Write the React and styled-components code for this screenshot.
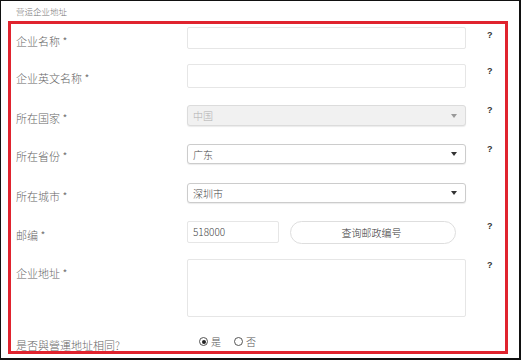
import React from 'react';
import styled, { createGlobalStyle } from 'styled-components';

const Global = createGlobalStyle`
  html, body { margin: 0; padding: 0; background: #fff; }
  body { font-family: "Noto Sans CJK SC", "Noto Sans", sans-serif; font-weight: 300; }
`;

/* marco exterior */
const Frame = styled.div`
  box-sizing: border-box;
  width: 521px;
  height: 360px;
  border: 1px solid #111;
  border-right-width: 2px;
  border-bottom-width: 2px;
  padding: 0 0 0 7px;
  overflow: hidden;
`;

const Title = styled.div`
  font-size: 8.5px;
  line-height: 20px;
  color: #777;
  padding-left: 8px;
`;

const RedBox = styled.div`
  box-sizing: border-box;
  width: 500px;
  height: 333px;
  border: 3px solid #e0232e;
  padding: 3px 0 0 5px;
  overflow: hidden;
`;

const Row = styled.div`
  display: grid;
  grid-template-columns: 171px 279px 1fr;
  align-items: start;
  height: ${(p) => p.h}px;
`;

const Label = styled.div`
  font-size: 11px;
  line-height: 16px;
  color: #666;
  padding-top: ${(p) => p.top ?? 5}px;
  white-space: nowrap;
`;

const Help = styled.div`
  font-family: "Liberation Sans", Arial, sans-serif;
  font-weight: bold;
  font-size: 9px;
  color: #333;
  padding-left: 21px;
  padding-top: ${(p) => p.top ?? 0}px;
  line-height: 10px;
`;

const TextInput = styled.div`
  box-sizing: border-box;
  height: ${(p) => p.h}px;
  width: ${(p) => p.w || 279}px;
  border: 1px solid #e6e6e6;
  border-radius: 2px;
  background: #fff;
  font-size: 10px;
  color: #444;
  line-height: ${(p) => p.h - 2}px;
  padding-left: 5px;
`;

const Select = styled.div`
  box-sizing: border-box;
  height: ${(p) => p.h}px;
  width: 279px;
  border: 1px solid ${(p) => (p.disabled ? '#dcdcdc' : '#cccccc')};
  border-radius: 3px;
  background: ${(p) => (p.disabled ? '#f1f1f1' : '#fff')};
  box-shadow: 0 1px 1px rgba(0, 0, 0, 0.08);
  display: flex;
  align-items: center;
  justify-content: space-between;
  padding: 0 8px 0 5px;
  font-size: 10px;
  color: ${(p) => (p.disabled ? '#b0b0b0' : '#444')};
`;

const Arrow = styled.span`
  width: 0;
  height: 0;
  border-left: 3px solid transparent;
  border-right: 3px solid transparent;
  border-top: 4px solid ${(p) => (p.light ? '#999' : '#333')};
`;

const ZipWrap = styled.div`
  display: flex;
  gap: 11px;
`;

const PillButton = styled.div`
  box-sizing: border-box;
  width: 166px;
  height: 23px;
  border: 1px solid #dedede;
  border-radius: 12px;
  background: #fff;
  font-size: 10px;
  color: #333;
  display: flex;
  align-items: center;
  justify-content: center;
  padding-right: 3px;
`;

const Radios = styled.div`
  display: flex;
  align-items: center;
  gap: 13px;
  padding-left: 12px;
  padding-top: 1px;
`;

const RadioItem = styled.label`
  display: flex;
  align-items: center;
  gap: 3px;
  font-size: 10px;
  color: #555;
`;

const Circle = styled.span`
  box-sizing: border-box;
  width: 9px;
  height: 9px;
  border-radius: 50%;
  border: 1px solid #555;
  display: flex;
  align-items: center;
  justify-content: center;
  &::after {
    content: '';
    width: 4px;
    height: 4px;
    border-radius: 50%;
    background: ${(p) => (p.checked ? '#222' : 'transparent')};
  }
`;

function Radio({ checked, children }) {
  return (
    <RadioItem>
      <Circle checked={checked} />
      {children}
    </RadioItem>
  );
}

export default function App() {
  return (
    <>
      <Global />
      <Frame>
        <Title>营运企业地址</Title>
        <RedBox>
          <Row h={37}>
            <Label top={6}>企业名称 *</Label>
            <TextInput h={22} />
            <Help top={3}>?</Help>
          </Row>
          <Row h={41}>
            <Label top={6}>企业英文名称 *</Label>
            <TextInput h={24} />
            <Help top={2}>?</Help>
          </Row>
          <Row h={39}>
            <Label top={5}>所在国家 *</Label>
            <Select h={21} disabled>
              中国
              <Arrow light />
            </Select>
            <Help top={-1}>?</Help>
          </Row>
          <Row h={39}>
            <Label top={4}>所在省份 *</Label>
            <Select h={20}>
              广东
              <Arrow />
            </Select>
            <Help top={0}>?</Help>
          </Row>
          <Row h={38}>
            <Label top={5}>所在城市 *</Label>
            <Select h={20}>
              深圳市
              <Arrow />
            </Select>
            <div />
          </Row>
          <Row h={38}>
            <Label top={6}>邮编 *</Label>
            <ZipWrap>
              <TextInput h={22} w={92}>518000</TextInput>
              <PillButton>查询邮政编号</PillButton>
            </ZipWrap>
            <Help top={0}>?</Help>
          </Row>
          <Row h={74}>
            <Label top={6}>企业地址 *</Label>
            <TextInput h={58} />
            <Help top={1}>?</Help>
          </Row>
          <Row h={30}>
            <Label top={4}>是否與營運地址相同?</Label>
            <Radios>
              <Radio checked>是</Radio>
              <Radio>否</Radio>
            </Radios>
            <div />
          </Row>
        </RedBox>
      </Frame>
    </>
  );
}
